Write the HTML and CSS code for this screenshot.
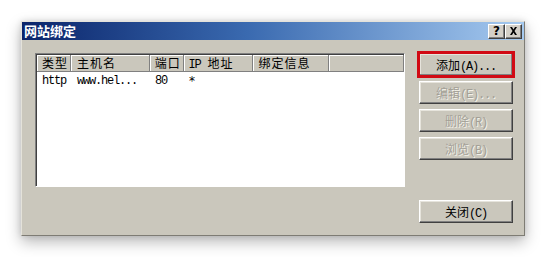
FILE: index.html
```html
<!DOCTYPE html>
<html lang="zh-CN">
<head>
  <meta charset="UTF-8">
  <title>网站绑定</title>
  <link rel="stylesheet" href="styles.css">
</head>
<body>
  <div class="dialog">
    <div class="titlebar">
      <span class="title">网站绑定</span>
      <div class="caption-btns">
        <button class="cap-btn help">?</button>
        <button class="cap-btn">
          <svg width="9" height="8" viewBox="0 0 9 8"><path d="M1 0h2l1.5 2.5L6 0h2L5.5 4 8 8H6L4.5 5.5 3 8H1l2.5-4z" fill="#000"/></svg>
        </button>
      </div>
    </div>

    <div class="dlg-body">
      <!-- bindings list -->
      <div class="listview">
        <div class="lv-row lv-head">
          <div class="col c-type">类型</div>
          <div class="col c-host">主机名</div>
          <div class="col c-port">端口</div>
          <div class="col c-ip"><span class="en ip">IP</span>地址</div>
          <div class="col c-info">绑定信息</div>
          <div class="col c-rest"></div>
        </div>
        <div class="lv-row lv-item">
          <div class="col c-type"><span class="en">http</span></div>
          <div class="col c-host"><span class="en">www.hel...</span></div>
          <div class="col c-port"><span class="en">80</span></div>
          <div class="col c-ip"><span class="star">*</span></div>
          <div class="col c-info"></div>
        </div>
      </div>

      <!-- buttons -->
      <div class="actions">
        <button class="btn marked">添加<span class="en">(A)...</span></button>
        <button class="btn" disabled>编辑<span class="en">(E)...</span></button>
        <button class="btn" disabled>删除<span class="en">(R)</span></button>
        <button class="btn" disabled>浏览<span class="en">(B)</span></button>
        <button class="btn close">关闭<span class="en">(C)</span></button>
      </div>
    </div>
  </div>
</body>
</html>
```

FILE: styles.css
```css
body {
  margin: 0;
  padding: 21px 23px 21px 21px;
  background: #fff;
  font-family: "Noto Sans CJK SC", sans-serif;
  font-size: 12px;
  color: #000;
}

.en {
  font-family: "Liberation Mono", monospace;
  font-size: 12px;
  letter-spacing: -1.2px;
}

.en.ip {
  margin-right: 7px;
}

.star {
  font-family: "DejaVu Sans", sans-serif;
  font-size: 12px;
}

.dialog {
  width: 502px;
  height: 213px;
  background: #cac7bc;
  border: 1px solid;
  border-color: #e4e2da #7e7c74 #7e7c74 #e4e2da;
  box-shadow: 0 6px 14px rgba(0,0,0,0.28), 0 0 6px rgba(0,0,0,0.12);
}

.titlebar {
  height: 18px;
  display: flex;
  align-items: center;
  justify-content: space-between;
  background: linear-gradient(to right, #0a246a, #3a6ab0 45%, #a6caf0);
  padding: 0 2px 0 2px;
}

.title {
  color: #fff;
  font-weight: bold;
  font-size: 13px;
  line-height: 18px;
}

.caption-btns {
  display: flex;
}

.cap-btn {
  width: 17px;
  height: 15px;
  padding: 0;
  margin: 0;
  display: flex;
  align-items: center;
  justify-content: center;
  background: #d4d0c8;
  border: 1px solid;
  border-color: #fff #404040 #404040 #fff;
  box-shadow: inset -1px -1px #808080;
  font-family: "DejaVu Sans", sans-serif;
  font-weight: bold;
  font-size: 12px;
  line-height: 1;
}

.dlg-body {
  display: flex;
  gap: 12px;
  padding: 13px 12px 12px 13px;
  height: 170px;
}

.listview {
  width: 368px;
  height: 132px;
  background: #fff;
  border: 1px solid;
  border-color: #808080 #fff #fff #808080;
  box-shadow: inset 1px 1px #404040;
}

.lv-row {
  display: flex;
  align-items: center;
}

.lv-head {
  height: 17px;
  background: #cac7bc;
  margin: 1px 0 0 1px;
}

.lv-head .col {
  height: 17px;
  line-height: 16px;
  box-shadow: inset -1px -1px #808080, inset 1px 1px #fff;
  letter-spacing: 1px;
}

.lv-item {
  height: 16px;
  line-height: 16px;
  margin-left: 1px;
}

.col {
  padding-left: 5px;
  box-sizing: border-box;
  white-space: nowrap;
}

.c-type { width: 34px; }
.c-host { width: 79px; padding-left: 6px; }
.c-port { width: 34px; }
.c-ip   { width: 70px; }
.c-info { width: 76px; }
.c-rest { width: 75px; }

.actions {
  display: flex;
  flex-direction: column;
  gap: 5px;
  width: 94px;
  padding-left: 2px;
}

.btn {
  height: 23px;
  width: 94px;
  padding: 0;
  margin: 0;
  background: #cac7bc;
  border: 1px solid;
  border-color: #fff #404040 #404040 #fff;
  box-shadow: inset -1px -1px #808080, inset 1px 1px #e6e4dc;
  font-family: "Noto Sans CJK SC", sans-serif;
  font-size: 12px;
  color: #000;
  cursor: pointer;
}

.btn:disabled {
  color: #a3a097;
  text-shadow: 1px 1px #f4f2ea;
}

.btn.marked {
  outline: 3px solid #d10a14;
  outline-offset: -1px;
}

.btn.close {
  margin-top: auto;
}
```
